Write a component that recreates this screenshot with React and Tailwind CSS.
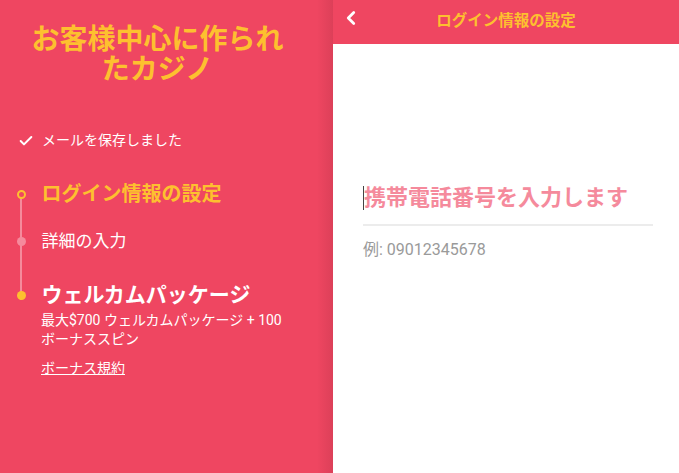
import { ChevronLeft, Check } from 'lucide-react'

const font = { fontFamily: 'Roboto, "Noto Sans CJK JP", sans-serif' }

export default function App() {
  return (
    <div className="flex h-[473px] w-[679px] overflow-hidden bg-white" style={font}>
      {/* Left promo panel */}
      <aside className="relative flex w-[333px] shrink-0 flex-col bg-[#ef4661] pl-[18px] pr-6">
        <div className="pointer-events-none absolute inset-y-0 right-0 w-4 bg-gradient-to-r from-transparent to-[#d43d55]/70" />
        <h1 className="mt-[25px] pr-[12px] text-center text-[28px] font-bold leading-[30px] text-[#fdc02f]">
          お客様中心に作られ<br />たカジノ
        </h1>

        <div className="mt-[45px] flex items-center gap-[8px] text-[14px] text-white">
          <Check size={16} strokeWidth={3} />
          <span>メールを保存しました</span>
        </div>

        <div className="relative mt-[29px]">
          <div className="absolute left-[2px] top-[14px] h-[106px] w-[2px] bg-[#f58a9c]" />

          <div className="flex items-center gap-[16px]">
            <span className="relative z-10 h-[9px] w-[9px] rounded-full border-2 border-[#fdc02f] bg-[#ef4661] -ml-[1.5px]" />
            <span className="text-[20px] font-bold leading-[28px] text-[#fdc02f]">ログイン情報の設定</span>
          </div>

          <div className="mt-[22px] flex items-center gap-[16px]">
            <span className="relative z-10 -ml-[1.5px] h-[9px] w-[9px] rounded-full bg-[#f58a9c]" />
            <span className="text-[17px] leading-[22px] text-white">詳細の入力</span>
          </div>

          <div className="mt-[28px] flex items-center gap-[16px]">
            <span className="relative z-10 -ml-[1.5px] h-[9px] w-[9px] rounded-full bg-[#fdc02f]" />
            <span className="text-[21px] font-bold leading-[30px] text-white">ウェルカムパッケージ</span>
          </div>
          <p className="mt-[1px] pl-[23px] text-[14px] leading-[19px] text-white">
            最大$700 ウェルカムパッケージ + 100<br />ボーナススピン
          </p>
          <a className="mt-[10px] block pl-[23px] text-[14px] leading-[19px] text-white underline">ボーナス規約</a>
        </div>
      </aside>

      {/* Login settings form */}
      <main className="flex flex-1 flex-col">
        <header className="relative flex h-[44px] items-center justify-center bg-[#ef4661]">
          <ChevronLeft size={22} strokeWidth={3} className="absolute left-[7px] top-[7px] text-white" />
          <span className="text-[15.5px] font-bold text-[#fdc02f]">ログイン情報の設定</span>
        </header>

        <div className="pl-[30px] pr-[26px] pt-[138px]">
          <div className="flex items-center border-b-2 border-[#ececec] pb-[10px]">
            <span className="h-[24px] w-px bg-[#444]" />
            <span className="text-[22px] font-bold leading-[32px] text-[#f58a9c]">携帯電話番号を入力します</span>
          </div>
          <p className="mt-[12px] text-[16px] text-[#9a9a9a]">例: 09012345678</p>
        </div>
      </main>
    </div>
  )
}
